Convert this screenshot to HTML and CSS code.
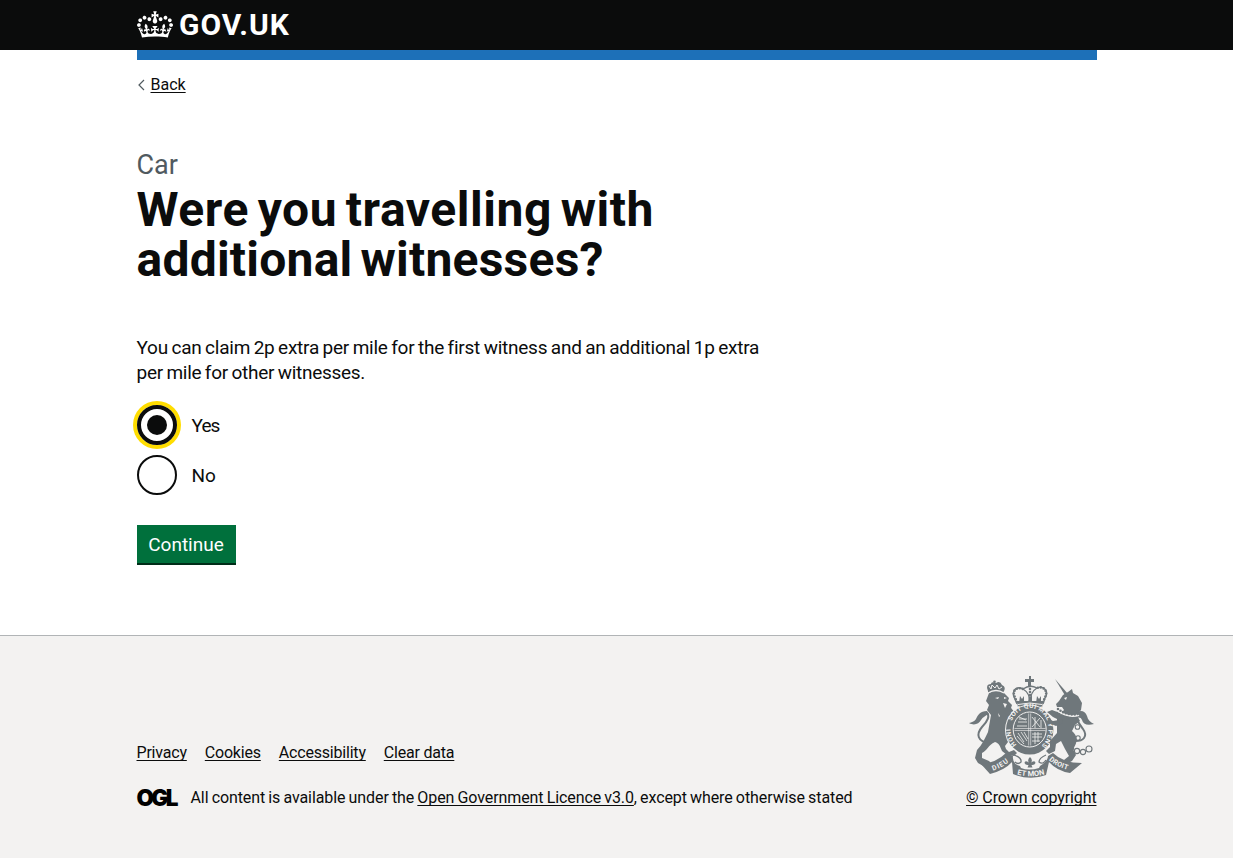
FILE: index.html
```html
<!DOCTYPE html>
<html lang="en">
<head>
<meta charset="utf-8">
<title>Were you travelling with additional witnesses?</title>
<link rel="stylesheet" href="styles.css">
</head>
<body>
<header class="header">
  <div class="container brand">
    <svg class="crown" viewBox="0 0 132 97" aria-hidden="true"><path d="M25 30.2c3.5 1.5 7.7-.2 9.1-3.7 1.5-3.6-.2-7.8-3.9-9.2-3.6-1.4-7.6.3-9.1 3.9-1.4 3.5.3 7.5 3.9 9zM9 39.5c3.6 1.5 7.8-.2 9.2-3.7 1.5-3.6-.2-7.8-3.9-9.1-3.6-1.5-7.6.2-9.1 3.8-1.4 3.5.3 7.5 3.8 9zM4.4 57.2c3.5 1.5 7.7-.2 9.1-3.8 1.5-3.6-.2-7.7-3.9-9.1-3.5-1.5-7.6.3-9.1 3.8-1.4 3.5.3 7.6 3.9 9.1zm38.3-21.4c3.5 1.5 7.7-.2 9.1-3.8 1.5-3.6-.2-7.7-3.9-9.1-3.6-1.5-7.6.3-9.1 3.8-1.3 3.6.4 7.7 3.9 9.1zm64.4-5.6c-3.6 1.5-7.8-.2-9.1-3.7-1.5-3.6.2-7.8 3.8-9.2 3.6-1.4 7.7.3 9.2 3.9 1.3 3.5-.4 7.5-3.9 9zm15.9 9.3c-3.6 1.5-7.7-.2-9.1-3.7-1.5-3.6.2-7.8 3.7-9.1 3.6-1.5 7.7.2 9.2 3.8 1.5 3.5-.3 7.5-3.8 9zm4.7 17.7c-3.6 1.5-7.8-.2-9.2-3.8-1.5-3.6.2-7.7 3.9-9.1 3.6-1.5 7.7.3 9.2 3.8 1.3 3.5-.4 7.6-3.9 9.1zM89.3 35.8c-3.6 1.5-7.8-.2-9.2-3.8-1.4-3.6.2-7.7 3.9-9.1 3.6-1.5 7.7.3 9.2 3.8 1.4 3.6-.3 7.7-3.9 9.1zM69.7 17.7l8.9 4.7V9.3l-8.9 2.8c-.2-.3-.5-.6-.9-.9L72.4 0H59.6l3.5 11.2c-.3.3-.6.5-.9.9l-8.8-2.8v13.1l8.8-4.7c.3.3.6.7.9.9l-5 15.4v.1c-.2.8-.4 1.6-.4 2.4 0 4.1 3.1 7.5 7 8.1h.2c.3 0 .7.1 1 .1.4 0 .7 0 1-.1h.2c4-.6 7.1-4.1 7.1-8.1 0-.8-.1-1.7-.4-2.4V34l-5.1-15.4c.4-.2.7-.6 1-.9zM66 92.8c16.9 0 32.8 1.1 47.1 3.2 4-16.9 8.9-26.7 14-33.5l-9.6-3.4c1 4.9 1.1 7.2 0 10.200-1.500-1.400-3-4.300-4.200-8.700L108.600 76c2.800-2 5-3.200 7.500-3.300-4.400 9.400-10 11.900-13.600 11.200-4.300-.8-6.300-4.600-5.600-7.900 1-4.700 5.700-5.900 8-.5 4.300-8.700-3-11.400-7.600-8.800 7.100-7.200 7.900-13.500 2.100-21.100-8 6.100-8.100 12.300-4.500 20.800-4.700-5.400-12.100-2.500-9.500 6.200 3.400-5.200 7.900-2 7.200 3.100-.6 4.300-6.400 7.800-13.500 7.200-10.300-.9-10.900-8-11.200-13.800 2.500-.5 7.100 1.800 11 7.300L80.200 60c-4.100 4.400-8 5.300-12.300 5.400 1.400-4.400 8-11.600 8-11.600H55.500s6.400 7.200 7.900 11.600c-4.200-.1-8-1-12.300-5.400l1.400 16.400c3.900-5.500 8.500-7.700 10.900-7.300-.3 5.800-.9 12.800-11.100 13.800-7.200.6-12.900-2.900-13.500-7.200-.7-5 3.800-8.300 7.100-3.100 2.700-8.700-4.600-11.600-9.400-6.200 3.700-8.500 3.600-14.700-4.600-20.800-5.800 7.600-5 13.900 2.200 21.100-4.700-2.600-11.900.1-7.700 8.800 2.300-5.500 7.100-4.200 8.100.5.7 3.300-1.300 7.100-5.700 7.900-3.500.7-9-1.800-13.500-11.200 2.500.1 4.700 1.300 7.500 3.300l-4.700-15.400c-1.200 4.400-2.700 7.200-4.300 8.700-1.100-3-.9-5.300 0-10.200l-9.500 3.400c5 6.900 9.900 16.700 14 33.500 14.800-2.100 30.800-3.200 47.700-3.200z"/></svg>
    <span class="logotype">GOV.UK</span>
  </div>
</header>
<div class="container">
  <div class="bar"></div>
  <a class="back" href="#"><svg class="chevron" viewBox="0 0 8 12"><path d="M7 1 2 6l5 5"/></svg><span class="back-text">Back</span></a>
  <main class="main">
    <span class="caption">Car</span>
    <h1 class="title"><span class="t1">Were you travelling with</span><br><span class="t2">additional witnesses?</span></h1>
    <p class="lead"><span class="l1">You can claim 2p extra per mile for the first witness and an additional 1p extra</span><br><span class="l2">per mile for other witnesses.</span></p>
    <div class="radios">
      <label class="radio"><span class="dial dial-on"></span><span class="yes">Yes</span></label>
      <label class="radio"><span class="dial"></span><span class="no">No</span></label>
    </div>
    <button class="button">Continue</button>
  </main>
</div>
<footer class="footer">
  <div class="container foot">
    <div class="meta">
      <nav class="links"><a href="#">Privacy</a><a href="#">Cookies</a><a href="#">Accessibility</a><a href="#">Clear data</a></nav>
      <div class="licence">
        <svg class="ogl" viewBox="0 0 41 17"><text x="-0.6" y="15.800" textLength="42">OGL</text></svg>
        <span class="lic-text">All content is available under the <a href="#">Open Government Licence v3.0</a>, except where otherwise stated</span>
      </div>
    </div>
    <div class="copyright">
      <svg class="arms" viewBox="0 0 125 102" aria-hidden="true">
        <defs>
          <path id="garter" d="M42.500 46A19 20.500 0 0 1 79.500 53.500A19 20.500 0 0 1 72 70"/>
          <path id="garter-left" d="M50 70.500A19 20.500 0 0 1 41.800 50"/>
          <path id="scroll-l" d="M23 95Q33 92 41 85"/>
          <path id="scroll-m" d="M47 98.300Q60 102.300 76 98.300"/>
          <path id="scroll-r" d="M80 84Q87 91 100 94"/>
        </defs>
        <!-- tails -->
        <path class="line w2" d="M21 67C8 66 7 58 13 51C18 46 22 39 17 36.500"/>
        <path class="ink" d="M18 35C11 35 9 39 7 43C5 46 3 46 0 47C5 50 10 48 12 44C14 41 16 40 20 38Z"/>
        <path class="line w2" d="M104 65C115 66 119 60 114 53C109 46 105 41 109 37"/>
        <path class="ink" d="M106 38C111 33 116 35 118 40C119 44 121 46 125 48C118 50 114 48 113 44C112 41 110 41 106 42Z"/>
        <!-- lion -->
        <path class="ink" d="M20 17Q28 12 35 17L37 19L40 22L39 25L43 29L42 32L45 37C43 43 37 46 36 51C36 57 39 59 42 61L43 64L39 66L36 70L37 73L40 76L45 74L48 77L45 80L38 79L33 75C31 70 30 67 26 66C19 69 18 75 13 77L13 82L20 85L24 89L16 91L9 87L6 82L8 74C13 69 16 62 19 56L22 39L18 34L20 29L17 25Z"/>
        <path class="ink" d="M35 27Q42 31 46 37L52 37L53 40L48 42L41 40L35 37Z"/>
        <path class="ink" d="M35 46L42 50L45 55L45 60L40 57L35 54Z"/>
        <path class="paper" d="M26 22l4-1-1 2zM35 21l3 1-3 1zM34 27l4 1-2 4zM29 37l2 3-1 1z"/>
        <!-- lion's crown -->
        <path class="ink" d="M19 15Q16 8 22 8Q22 5 27 7Q31 4 33 9Q38 11 34 17Q27 13 19 17Z"/>
        <circle class="ink" cx="25.500" cy="5.800" r="1.300"/>
        <path class="paper-line" d="M20 10l2 3 1-4 3 3 2-3 2 4 3-2"/>
        <path class="paper-line w1" d="M19 17Q27 12 35 17"/>
        <!-- royal crown -->
        <path class="ink" d="M60 0h2v3h3v3h-3v4h-3V6h-3V3h4z"/>
        <path class="line w1" d="M48 28L45 21C42 13 49 10 54 13Q61 17 61 27Q61 16 68 12C76 9 80 16 76 22L74 28M54 13Q61 8 68 12"/>
        <path class="line beads" d="M48 26L45 19C44 13 49 11 54 13M74 26L77 19C78 13 73 10 68 12M61 10V27"/>
        <path class="ink" d="M48 25h26l-1 7Q61 28 49 32z"/>
        <path class="ink" d="M51 20l2 3 2-3v7h-5zM60 19l1 3 2-3v8h-4zM68 20l2 3 2-3v7h-5z"/>
        <path class="paper-line" d="M49 28.500Q61 25.500 73 28.500"/>
        <!-- garter and shield -->
        <ellipse class="paper" cx="60.700" cy="54" rx="24.700" ry="25.500"/>
        <ellipse class="ink" cx="60.700" cy="54" rx="23.700" ry="24.500"/>
        <ellipse class="paper-line" cx="60.700" cy="53.500" rx="16.500" ry="17.500"/>
        <path class="paper-line quarter" d="M59.700 37.500v32M61.700 37.500v32M45.500 52.500h31M45.500 54.500h31"/>
        <path class="paper-line thin" d="M50 43h8M49 46h9M48 50h10M50 41l7 3M63 41l8 10M66 41v11M63 51l8-9M72 44v8M49 57l6 9M52 56l6 9M55 56l4 7M48 60l7 8M63 58h10M63 61h10M63 65h8M66 56v12M69 56v10"/>
        <text class="arms-text"><textPath href="#garter" startOffset="1" textLength="77">SOIT QUI MAL Y PENSE</textPath></text>
        <text class="arms-text"><textPath href="#garter-left" startOffset="3" textLength="17">HONI</textPath></text>
        <!-- unicorn -->
        <path class="ink" d="M86 3L99 18L97 21Z"/>
        <path class="ink" d="M94 19L99 16L103 13L104 17L109 20L113 27L112 34L108 39L111 45L106 49L103 55C109 60 109 66 104 73L107 79L103 85L97 88L95 84L100 80L96 73L92 65L87 68L86 75L80 78L77 75L81 71L81 65L88 57L88 50L88 43L95 34L93 31L88 31L87 28L90 25Z"/>
        <path class="ink" d="M91 37L83 34L78 36L84 41L90 44L84 45L79 43L80 47L87 50L94 47Z"/>
        <path class="paper" d="M95 22l3-1-1 3z"/>
        <path class="paper-line w2" d="M89 35Q99 42 110 39"/>
        <path class="line beads" d="M89 33Q98 40 109 38M88 37Q98 44 109 42"/>
        <g class="chain"><circle cx="108.500" cy="51" r="2.300"/><circle cx="109" cy="62" r="2.200"/><circle cx="102" cy="72" r="2.600"/><circle cx="108" cy="75" r="2.600"/><circle cx="114" cy="76" r="2.600"/><circle cx="120" cy="73" r="3"/></g>
        <!-- motto scroll -->
        <path class="ink" d="M12 88Q27 87 37 77L44 80Q43 88 51 90L52 92Q60 95 70 92L71 90Q79 85 79 80L84 77Q94 87 113 87L101 97Q88 95 80 86L77 99Q61 105 44 98L43 86Q36 94 21 98Z"/>
        <path class="paper" d="M49 80Q60 85 73 80Q68 84 69 90Q61 93 53 90Q54 84 49 80Z"/>
        <path class="line w1" d="M45 79Q53 82 52 86Q49 89 46 86M77 79Q70 82 70 86Q74 89 77 84"/>
        <path class="ink" d="M61 81q3 3 1.200 5.500 4-2.500 4.300.5-1 2.500-4 2l1 2.500h-5l1-2.500q-3 .5-4-2 .3-3 4.300-.5-1.800-2.500 1.200-5.500z"/>
        <text class="arms-text motto"><textPath href="#scroll-l" startOffset="1" textLength="18">DIEU</textPath></text>
        <text class="arms-text big"><textPath href="#scroll-m" startOffset="1" textLength="28">ET MON</textPath></text>
        <text class="arms-text motto"><textPath href="#scroll-r" startOffset="0" textLength="21">DROIT</textPath></text>
      </svg>
      <a class="crown-link" href="#">© Crown copyright</a>
    </div>
  </div>
</footer>
</body>
</html>
```
FILE: styles.css
```css
* { box-sizing: border-box; }
body { margin: 0; background: #fff; color: #0b0c0c; font-family: Roboto, sans-serif; font-size: 19px; line-height: 25px; }
a { color: inherit; }
.container { width: 960px; margin: 0 auto; }
.header { background: #0b0c0c; height: 50px; color: #fff; }
.brand { display: flex; padding-top: 10px; }
.crown { width: 36px; height: 27px; margin-top: .5px; fill: #fff; }
.logotype { font: bold 30px/29px Roboto, sans-serif; margin-left: 6.5px; letter-spacing: 1px; }
.bar { height: 10px; background: #1d70b8; }
.back { display: flex; align-items: center; margin-top: 15px; height: 20px; font-size: 16px; line-height: 20px; text-decoration: none; }
.chevron { width: 8px; height: 12px; margin-right: 6px; fill: none; stroke: #505a5f; stroke-width: 1.2; }
.back-text, .links a, .licence a, .crown-link { text-decoration: underline; text-decoration-thickness: 1px; text-underline-offset: 2px; text-decoration-skip-ink: none; }
.main { padding-top: 55px; height: 540px; }
.caption { display: block; font-size: 27px; line-height: 30px; color: #505a5f; }
.title { margin: 5px 0 50px; font-size: 48px; line-height: 50px; font-weight: 700; white-space: nowrap; }
.t1 { letter-spacing: .55px; word-spacing: -3.8px; }
.t2 { letter-spacing: .22px; word-spacing: -4px; }
.lead { margin: 0 0 20px; white-space: nowrap; letter-spacing: -.25px; word-spacing: -.85px; }
.l2 { letter-spacing: -.28px; }
.radios { display: flex; flex-direction: column; gap: 10px; }
.radio { display: flex; align-items: center; gap: 15px; height: 40px; }
.yes { letter-spacing: -.9px; }
.dial { width: 40px; height: 40px; border: 2px solid #0b0c0c; border-radius: 50%; }
.dial-on { border-width: 4px; box-shadow: 0 0 0 4px #fd0; display: grid; place-items: center; }
.dial-on::after { content: ""; width: 20px; height: 20px; border-radius: 50%; background: #0b0c0c; }
.button { display: block; margin-top: 30px; width: 99px; height: 38px; padding: 2px 0 0; border: 0; background: #00703c; box-shadow: 0 2px 0 #002d18; color: #fff; font: 19px/36px Roboto, sans-serif; }
.footer { background: #f3f2f1; border-top: 1px solid #b1b4b6; height: 223px; font-size: 16px; line-height: 20px; }
.foot { display: flex; justify-content: space-between; padding-top: 40px; }
.meta { padding-top: 67px; }
.links { display: flex; gap: 18px; margin-bottom: 25px; letter-spacing: -.2px; }
.licence { display: flex; align-items: center; gap: 13px; white-space: nowrap; letter-spacing: -.09px; word-spacing: -.7px; }
.ogl { width: 41px; height: 17px; overflow: visible; }
.ogl text { font: 900 22.5px Inter, sans-serif; letter-spacing: 0; }
.copyright { display: flex; flex-direction: column; align-items: flex-end; gap: 10px; letter-spacing: -.12px; }
.arms { width: 125px; height: 102px; margin-right: 3px; overflow: visible; }
.ink { fill: #6f777b; }
.paper { fill: #f3f2f1; }
.line { fill: none; stroke: #6f777b; stroke-width: 1.5; }
.paper-line { fill: none; stroke: #f3f2f1; stroke-width: 1; }
.paper-line.quarter { stroke-width: .6; }
.paper-line.thin { stroke-width: .8; }
.w1 { stroke-width: 1.3; }
.w2 { stroke-width: 2; }
.beads { stroke-width: 2.6; stroke-linecap: round; stroke-dasharray: 0 3; }
.chain { fill: none; stroke: #6f777b; stroke-width: 1.1; }
.arms-text { font: bold 6.5px Roboto, sans-serif; fill: #f3f2f1; }
.arms-text.motto { font-size: 7px; }
.arms-text.big { font-size: 7.5px; }
```
